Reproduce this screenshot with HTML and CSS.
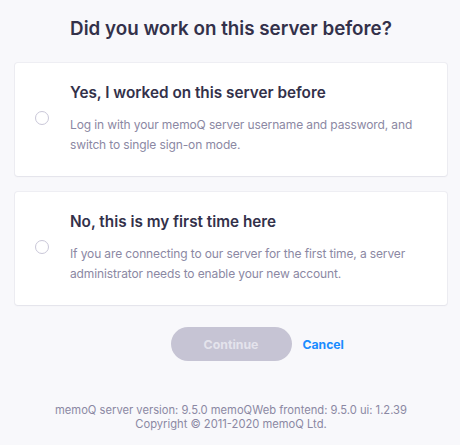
FILE: index.html
```html
<!DOCTYPE html>
<html lang="en">
<head>
<meta charset="utf-8">
<title>memoQ</title>
<link rel="stylesheet" href="styles.css">
</head>
<body>
<main class="page">
  <h1 class="heading">Did you work on this server before?</h1>
  <label class="card">
    <span class="radio"></span>
    <span class="card-text">
      <span class="card-title">Yes, I worked on this server before</span>
      <span class="card-desc">Log in with your memoQ server username and password, and switch to single sign-on mode.</span>
    </span>
  </label>
  <label class="card">
    <span class="radio"></span>
    <span class="card-text">
      <span class="card-title">No, this is my first time here</span>
      <span class="card-desc">If you are connecting to our server for the first time, a server administrator needs to enable your new account.</span>
    </span>
  </label>
  <div class="actions">
    <button class="btn-continue" type="button" disabled>Continue</button>
    <a class="btn-cancel" href="#">Cancel</a>
  </div>
  <footer class="footer">
    <div>memoQ server version: 9.5.0 memoQWeb frontend: 9.5.0 ui: 1.2.39</div>
    <div>Copyright © 2011-2020 memoQ Ltd.</div>
  </footer>
</main>
</body>
</html>
```
FILE: styles.css
```css
html, body {
  margin: 0;
  padding: 0;
  background: #f8f8fb;
}
body {
  font-family: Inter, "Noto Sans", sans-serif;
  color: #33314a;
}
.page {
  width: 432px;
  margin-left: 15px;
  padding-top: 17px;
  display: flex;
  flex-direction: column;
}
.heading {
  margin: 0 0 22px;
  font-size: 18.8px;
  line-height: 24px;
  font-weight: 600;
  text-align: center;
  color: #33314a;
}
.card {
  display: flex;
  align-items: center;
  background: #ffffff;
  border-radius: 3px;
  box-shadow: 0 0 0 1px rgba(60, 60, 100, 0.05), 0 1px 2px rgba(60, 60, 100, 0.06);
  padding: 18px 20px 21px 20px;
  margin-bottom: 16px;
  cursor: pointer;
}
.card:last-of-type { margin-bottom: 0; }
.radio {
  flex: none;
  width: 12px;
  height: 12px;
  border: 1px solid #c9c7d8;
  border-radius: 50%;
  background: #fff;
  margin-right: 21px;
}
.card-text {
  display: flex;
  flex-direction: column;
}
.card-title {
  font-size: 15.3px;
  line-height: 24px;
  font-weight: 600;
  color: #33314a;
  margin-bottom: 10px;
}
.card-desc {
  font-size: 12px;
  line-height: 20px;
  letter-spacing: -0.12px;
  color: #8b88a3;
}
.actions {
  display: grid;
  grid-template-columns: 1fr auto 1fr;
  align-items: center;
  margin-top: 22px;
}
.btn-continue {
  grid-column: 2;
  width: 121px;
  height: 34px;
  border: none;
  border-radius: 17px;
  background: #c6c4d4;
  color: #e4e3ec;
  font-family: inherit;
  font-size: 12.3px;
  font-weight: 700;
  padding: 0;
}
.btn-cancel {
  grid-column: 3;
  justify-self: start;
  margin-left: 11px;
  font-size: 12.2px;
  font-weight: 700;
  color: #1a8cff;
  text-decoration: none;
}
.footer {
  margin-top: 42px;
  text-align: center;
  font-size: 11.2px;
  line-height: 14px;
  color: #8b88a3;
}
```
